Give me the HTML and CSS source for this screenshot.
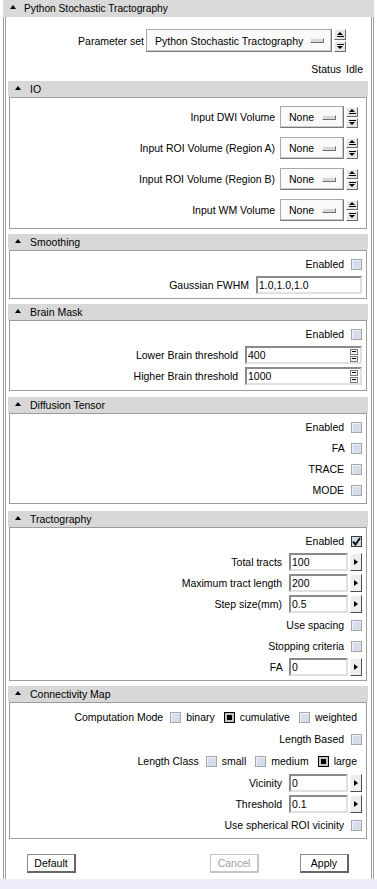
FILE: index.html
```html
<!DOCTYPE html>
<html lang="en">
<head>
  <meta charset="UTF-8" />
  <meta name="viewport" content="width=device-width, initial-scale=1.0" />
  <title>Python Stochastic Tractography</title>
  <link rel="stylesheet" href="styles.css">
</head>
<body>
  <div class="panel">
    <div class="title"><span class="tri"></span>Python Stochastic Tractography</div>
    <div class="frame">
      <div class="param-row">
        <span>Parameter set</span>
        <div class="menu wide">Python Stochastic Tractography<i></i></div>
        <div class="stepper"><b class="up"></b><b class="down"></b></div>
      </div>
      <div class="status-row"><span>Status</span><span>Idle</span></div>

      <div class="sec">
        <div class="sec-head"><span class="tri"></span>IO</div>
        <div class="sec-body io">
          <div class="row">Input DWI Volume <div class="menu">None<i></i></div><div class="stepper"><b class="up"></b><b class="down"></b></div></div>
          <div class="row">Input ROI Volume (Region A) <div class="menu">None<i></i></div><div class="stepper"><b class="up"></b><b class="down"></b></div></div>
          <div class="row">Input ROI Volume (Region B) <div class="menu">None<i></i></div><div class="stepper"><b class="up"></b><b class="down"></b></div></div>
          <div class="row">Input WM Volume <div class="menu">None<i></i></div><div class="stepper"><b class="up"></b><b class="down"></b></div></div>
        </div>
      </div>

      <div class="sec">
        <div class="sec-head"><span class="tri"></span>Smoothing</div>
        <div class="sec-body">
          <div class="row">Enabled <span class="cb"></span></div>
          <div class="row">Gaussian FWHM <div class="field text">1.0,1.0,1.0</div></div>
        </div>
      </div>

      <div class="sec">
        <div class="sec-head"><span class="tri"></span>Brain Mask</div>
        <div class="sec-body brain">
          <div class="row">Enabled <span class="cb"></span></div>
          <div class="row">Lower Brain threshold <div class="field spinbox">400<div class="tiny"><b></b><b></b></div></div></div>
          <div class="row">Higher Brain threshold <div class="field spinbox">1000<div class="tiny"><b></b><b></b></div></div></div>
        </div>
      </div>

      <div class="sec dt">
        <div class="sec-head"><span class="tri"></span>Diffusion Tensor</div>
        <div class="sec-body">
          <div class="row">Enabled <span class="cb"></span></div>
          <div class="row">FA <span class="cb"></span></div>
          <div class="row">TRACE <span class="cb"></span></div>
          <div class="row">MODE <span class="cb"></span></div>
        </div>
      </div>

      <div class="sec tract">
        <div class="sec-head"><span class="tri"></span>Tractography</div>
        <div class="sec-body">
          <div class="row">Enabled <span class="cb on"><svg width="9" height="9" viewBox="0 0 9 9"><path d="M1 4.5l2.5 3L8 1" fill="none" stroke="#111" stroke-width="2"/></svg></span></div>
          <div class="row">Total tracts <div class="combo"><div class="field num">100</div><span class="arrow"></span></div></div>
          <div class="row">Maximum tract length <div class="combo"><div class="field num">200</div><span class="arrow"></span></div></div>
          <div class="row">Step size(mm) <div class="combo"><div class="field num">0.5</div><span class="arrow"></span></div></div>
          <div class="row">Use spacing <span class="cb"></span></div>
          <div class="row">Stopping criteria <span class="cb"></span></div>
          <div class="row">FA <div class="combo"><div class="field num">0</div><span class="arrow"></span></div></div>
        </div>
      </div>

      <div class="sec">
        <div class="sec-head"><span class="tri"></span>Connectivity Map</div>
        <div class="sec-body">
          <div class="row choice">
            <span class="choice-label">Computation Mode</span>
            <span class="opt"><span class="cb"></span>binary</span>
            <span class="opt"><span class="cb on-radio"></span>cumulative</span>
            <span class="opt"><span class="cb"></span>weighted</span>
          </div>
          <div class="row">Length Based <span class="cb"></span></div>
          <div class="row choice">
            <span class="choice-label">Length Class</span>
            <span class="opt"><span class="cb"></span>small</span>
            <span class="opt"><span class="cb"></span>medium</span>
            <span class="opt"><span class="cb on-radio"></span>large</span>
          </div>
          <div class="row">Vicinity <div class="combo"><div class="field num">0</div><span class="arrow"></span></div></div>
          <div class="row">Threshold <div class="combo"><div class="field num">0.1</div><span class="arrow"></span></div></div>
          <div class="row">Use spherical ROI vicinity <span class="cb"></span></div>
        </div>
      </div>

      <div class="buttons">
        <div class="btn default">Default</div>
        <div class="btn off">Cancel</div>
        <div class="btn">Apply</div>
      </div>
    </div>
  </div>
  <div class="strip"></div>
</body>
</html>
```

FILE: styles.css
```css
body {
  margin: 0; background: #fff; color: #000;
  font-family: "Liberation Sans", Arial, sans-serif; font-size: 10.5px;
}
.panel { width: 371px; margin-left: 3px; }
.title {
  height: 17px; background: #d9d9d9;
  display: flex; align-items: center; padding-left: 7px;
  font-size: 10.2px;
}
.tri {
  width: 0; height: 0; margin: 0 8px 3px 0;
  border-left: 3px solid transparent; border-right: 3px solid transparent;
  border-bottom: 4px solid #000;
}
.frame {
  border-left: 3px double #a0a0a0; border-right: 3px double #a0a0a0;
  padding: 12px 0 6px;
}
.param-row {
  display: flex; justify-content: flex-end; align-items: center;
  gap: 2px; height: 23px; padding-right: 25px;
}
.status-row {
  display: flex; justify-content: flex-end; align-items: center;
  gap: 5px; height: 15px; margin-top: 9px; padding-right: 8px;
}

/* collapsible sections */
.sec { margin: 5px 3px 0 2px; }
.sec.dt { margin-top: 6px; }
.sec.tract { margin-top: 7px; }
.sec-head {
  height: 16px; background: #d8d8d8;
  display: flex; align-items: center; padding-left: 7px;
}
.sec-head .tri { margin-right: 9px; }
.sec-body {
  margin: 0 1px; border: 1px solid #9c9c9c;
  padding: 4px;
  display: flex; flex-direction: column; align-items: flex-end; gap: 3px;
}
.sec-body.io { padding: 8px 8px 7px; gap: 9px; }
.sec-body.brain { padding-bottom: 5px; }
.row { display: flex; align-items: center; height: 18px; gap: 4px; white-space: pre; }
.io .row { height: 22px; gap: 2px; }

/* option menus */
.menu {
  box-sizing: border-box; width: 64px; height: 22px;
  display: flex; align-items: center; justify-content: space-between;
  padding: 0 7px 0 8px; background: #fafafa;
  border: 1px solid #a8a8a8; border-right-color: #7a7a7a; border-bottom-color: #7a7a7a;
  box-shadow: inset -1px -1px #c8c8c8;
}
.menu.wide { width: 186px; height: 23px; }
.menu i {
  box-sizing: border-box; width: 14px; height: 5px; background: #d8d8d8;
  border: 1px solid; border-color: #f6f6f6 #707070 #707070 #f6f6f6;
}
.stepper { display: flex; flex-direction: column; gap: 1px; }
.stepper b {
  box-sizing: border-box; width: 12px; height: 11px;
  border: 1px solid; border-color: #fafafa #6a6a6a #6a6a6a #fafafa;
  background: #e6e6e6;
  display: flex; flex-direction: column; align-items: center; justify-content: center; gap: 1px;
}
.io .stepper b { height: 10px; }
.up::before, .down::after {
  content: ""; width: 0; height: 0;
  border-left: 3px solid transparent; border-right: 3px solid transparent;
}
.up::before { border-bottom: 3px solid #000; }
.down::after { border-top: 3px solid #000; }
.up::after, .down::before { content: ""; width: 7px; height: 1px; background: #000; }

/* entry fields */
.field {
  box-sizing: border-box; height: 18px; background: #fff;
  border: 2px solid; border-color: #8a8a8a #e0e0e0 #e0e0e0 #8a8a8a;
  padding-left: 1px; display: flex; align-items: center;
}
.field.text { width: 106px; }
.field.spinbox { width: 117px; }
.field.num { width: 59px; }
.tiny { margin-left: auto; margin-right: 2px; display: flex; flex-direction: column; gap: 1px; }
.tiny b {
  box-sizing: border-box; width: 8px; height: 6px;
  border: 1px solid #7c7c7c; background: #f2f2f2;
  display: flex; align-items: center; justify-content: center;
}
.tiny b::before { content: ""; width: 4px; height: 1px; background: #000; }
.combo { display: flex; gap: 2px; }
.arrow {
  box-sizing: border-box; width: 12px; height: 18px;
  border: 1px solid; border-color: #fafafa #4c4c4c #4c4c4c #fafafa;
  background: #eeeeee;
  display: flex; align-items: center; justify-content: center;
}
.arrow::before {
  content: ""; width: 0; height: 0;
  border-top: 3px solid transparent; border-bottom: 3px solid transparent;
  border-left: 4px solid #000;
}

/* check boxes and radio choices */
.cb {
  box-sizing: border-box; width: 11px; height: 11px; flex: none;
  border: 1px solid #a6a6a6; background: #d4deeb;
  box-shadow: inset 1px 1px #eef2f8;
}
.cb.on {
  border-color: #3c3c3c; box-shadow: none;
  display: flex; align-items: center; justify-content: center;
}
.cb.on-radio {
  border-color: #000; background: #c4c4c4; box-shadow: none;
  display: flex; align-items: center; justify-content: center;
}
.cb.on-radio::after { content: ""; width: 5px; height: 5px; background: #000; }
.row.choice { gap: 9px; height: 20px; padding-right: 5px; }
.choice-label { margin-right: -2px; }
.opt { display: flex; align-items: center; gap: 5px; }

/* dialog buttons */
.buttons { display: flex; gap: 41px; margin-top: 15px; padding: 0 22px 0 21px; }
.btn {
  box-sizing: border-box; width: 49px; height: 19px; background: #fff;
  border: 1px solid #8c8c8c; border-right: 2px solid #666; border-bottom: 2px solid #666;
  display: flex; align-items: center; justify-content: center;
}
.btn.default { margin-right: auto; }
.btn.off { color: #a0a0a0; border-color: #c4c4c4; }
.strip { height: 11px; background: #ececfa; }
```
